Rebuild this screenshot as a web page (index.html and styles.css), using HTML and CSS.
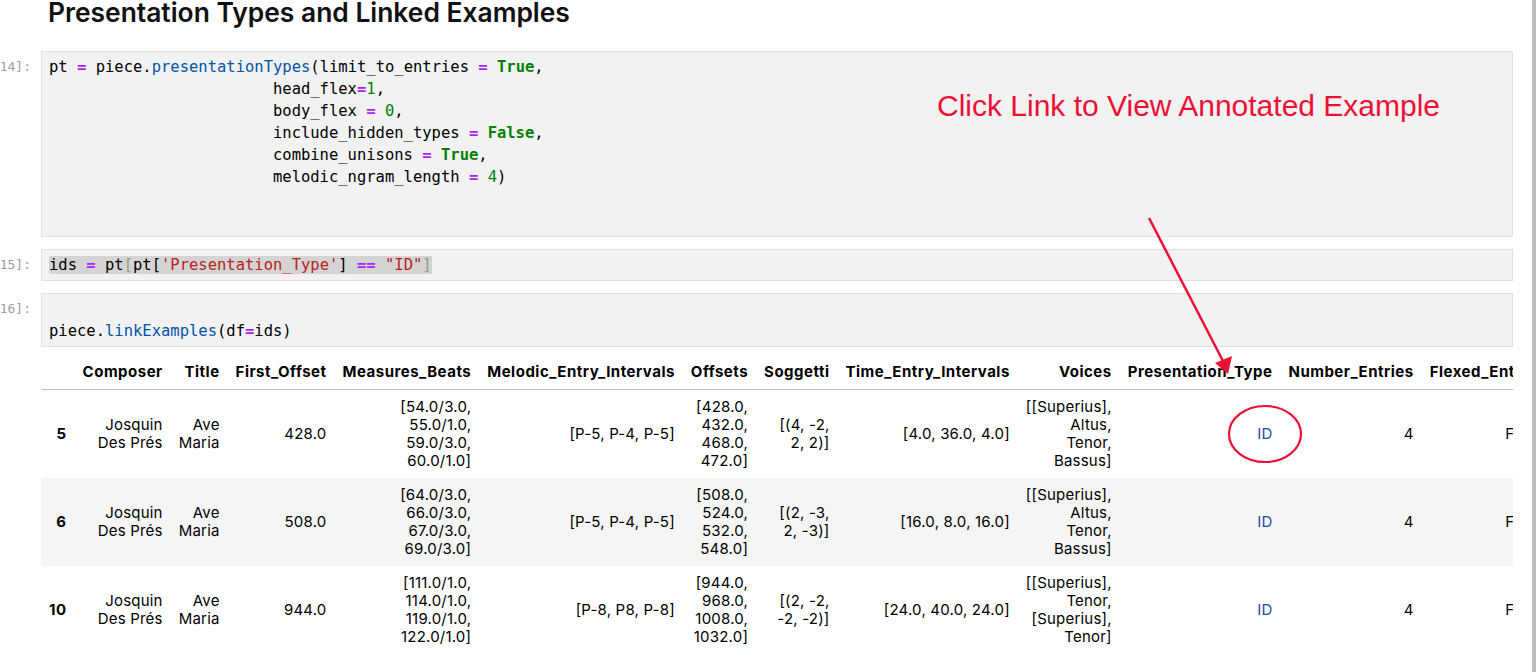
FILE: index.html
```html
<!DOCTYPE html>
<html lang="en">
<head>
<meta charset="utf-8">
<title>Presentation Types and Linked Examples</title>
<link rel="stylesheet" href="styles.css">
</head>
<body>
<div class="page">
  <div class="main">
    <h2 class="title">Presentation Types and Linked Examples</h2>

    <div class="cell">
      <div class="prompt"><span>[14]:</span></div>
      <div class="input">
<pre class="code">pt <span class="op">=</span> piece<span>.</span><span class="prop">presentationTypes</span>(limit_to_entries <span class="op">=</span> <span class="kw">True</span>,
                        head_flex<span class="op">=</span><span class="num">1</span>,
                        body_flex <span class="op">=</span> <span class="num">0</span>,
                        include_hidden_types <span class="op">=</span> <span class="kw">False</span>,
                        combine_unisons <span class="op">=</span> <span class="kw">True</span>,
                        melodic_ngram_length <span class="op">=</span> <span class="num">4</span>)

 </pre>
      </div>
    </div>

    <div class="cell">
      <div class="prompt"><span>[15]:</span></div>
      <div class="input">
<pre class="code"><span class="sel">ids <span class="op">=</span> pt<span class="match">[</span>pt[<span class="str">'Presentation_Type'</span>] <span class="op">==</span> <span class="str">"ID"</span><span class="match">]</span></span></pre>
      </div>
    </div>

    <div class="cell cell-last">
      <div class="prompt"><span>[16]:</span></div>
      <div class="input">
<pre class="code"> 
piece<span>.</span><span class="prop">linkExamples</span>(df<span class="op">=</span>ids)</pre>
      </div>
    </div>

    <div class="table-wrap">
      <table class="df">
        <thead>
          <tr>
            <th></th>
            <th>Composer</th>
            <th>Title</th>
            <th>First_Offset</th>
            <th>Measures_Beats</th>
            <th>Melodic_Entry_Intervals</th>
            <th>Offsets</th>
            <th>Soggetti</th>
            <th>Time_Entry_Intervals</th>
            <th>Voices</th>
            <th>Presentation_Type</th>
            <th>Number_Entries</th>
            <th>Flexed_Entries</th>
          </tr>
        </thead>
        <tbody>
          <tr>
            <th>5</th>
            <td>Josquin<br>Des Prés</td>
            <td>Ave<br>Maria</td>
            <td>428.0</td>
            <td>[54.0/3.0,<br>55.0/1.0,<br>59.0/3.0,<br>60.0/1.0]</td>
            <td>[P-5, P-4, P-5]</td>
            <td>[428.0,<br>432.0,<br>468.0,<br>472.0]</td>
            <td>[(4, -2,<br>2, 2)]</td>
            <td>[4.0, 36.0, 4.0]</td>
            <td>[[Superius],<br>Altus,<br>Tenor,<br>Bassus]</td>
            <td><a class="link" href="#">ID</a></td>
            <td>4</td>
            <td class="flexed">False</td>
          </tr>
          <tr>
            <th>6</th>
            <td>Josquin<br>Des Prés</td>
            <td>Ave<br>Maria</td>
            <td>508.0</td>
            <td>[64.0/3.0,<br>66.0/3.0,<br>67.0/3.0,<br>69.0/3.0]</td>
            <td>[P-5, P-4, P-5]</td>
            <td>[508.0,<br>524.0,<br>532.0,<br>548.0]</td>
            <td>[(2, -3,<br>2, -3)]</td>
            <td>[16.0, 8.0, 16.0]</td>
            <td>[[Superius],<br>Altus,<br>Tenor,<br>Bassus]</td>
            <td><a class="link" href="#">ID</a></td>
            <td>4</td>
            <td class="flexed">False</td>
          </tr>
          <tr>
            <th>10</th>
            <td>Josquin<br>Des Prés</td>
            <td>Ave<br>Maria</td>
            <td>944.0</td>
            <td>[111.0/1.0,<br>114.0/1.0,<br>119.0/1.0,<br>122.0/1.0]</td>
            <td>[P-8, P8, P-8]</td>
            <td>[944.0,<br>968.0,<br>1008.0,<br>1032.0]</td>
            <td>[(2, -2,<br>-2, -2)]</td>
            <td>[24.0, 40.0, 24.0]</td>
            <td>[[Superius],<br>Tenor,<br>[Superius],<br>Tenor]</td>
            <td><a class="link" href="#">ID</a></td>
            <td>4</td>
            <td class="flexed">False</td>
          </tr>
        </tbody>
      </table>
    </div>

    <div class="note">Click Link to View Annotated Example</div>
    <svg class="overlay" width="1536" height="672" viewBox="0 0 1536 672" aria-hidden="true">
      <line x1="1149" y1="218" x2="1223" y2="361" stroke="#ee0f35" stroke-width="2.5"/>
      <polygon points="1228,374 1215,363 1232,356" fill="#ee0f35"/>
      <ellipse cx="1265" cy="434" rx="36" ry="28" fill="none" stroke="#ee0f35" stroke-width="2.2"/>
    </svg>
  </div>
  <div class="scrollbar"></div>
</div>
</body>
</html>
```

FILE: styles.css
```css
html, body {
  margin: 0;
  padding: 0;
  background: #ffffff;
  overflow: hidden;
}

body {
  font-family: Inter, "Noto Sans", sans-serif;
  color: #000;
}

.page {
  display: flex;
  width: 1536px;
  height: 672px;
}

.main {
  position: relative;
  flex: 1;
  padding-right: 19px;
  min-width: 0;
}

.scrollbar {
  width: 4px;
  flex: none;
  background: #bdbdbd;
}

.title {
  margin: 0 0 27px 48px;
  font-family: Inter, "Noto Sans", sans-serif;
  font-weight: 600;
  font-size: 26.4px;
  line-height: 24px;
  color: #111;
}

.cell {
  display: flex;
  margin-bottom: 12px;
}

.cell-last {
  margin-bottom: 8px;
}

.prompt {
  width: 41px;
  flex: none;
  box-sizing: border-box;
  display: flex;
  justify-content: flex-end;
  padding-right: 10px;
  padding-top: 5px;
  font-family: "DejaVu Sans Mono", monospace;
  font-size: 13px;
  line-height: 22px;
  color: #9e9e9e;
  white-space: nowrap;
}

.input {
  flex: 1;
  background: #f2f2f2;
  border: 1px solid #e0e0e0;
  padding: 4px 7px;
  min-width: 0;
}

.code {
  margin: 0;
  font-family: "DejaVu Sans Mono", monospace;
  font-size: 15.5px;
  line-height: 22px;
  color: #000;
}

.op { color: #aa22ff; font-weight: bold; }
.kw { color: #008000; font-weight: bold; }
.num { color: #008000; }
.prop { color: #0055aa; }
.str { color: #ba2121; }
.match { color: #9a9a7a; }
.sel { background: #d4d4d4; }

.table-wrap {
  margin-left: 41px;
  width: 1472px;
  overflow: hidden;
}

.df {
  border-collapse: collapse;
  border-spacing: 0;
  font-family: Inter, "Noto Sans", sans-serif;
  font-size: 15px;
  line-height: 18px;
  letter-spacing: 0.2px;
  white-space: nowrap;
  color: #000;
}

.df th,
.df td {
  padding: 8px;
  text-align: right;
  vertical-align: middle;
}

.df thead th {
  font-weight: 700;
  letter-spacing: 0.5px;
  border-bottom: 1px solid #bdbdbd;
}

.df tbody th {
  font-weight: 700;
  letter-spacing: 0.5px;
}

.df tbody tr:nth-child(even) {
  background: #f5f5f5;
}

.df td.flexed {
  padding-right: 9px;
}

.link {
  color: #1f4ea3;
  text-decoration: none;
}

.note {
  position: absolute;
  left: 937px;
  top: 88px;
  font-family: "Liberation Sans", Arial, sans-serif;
  font-size: 30px;
  line-height: 36px;
  color: #ee0f35;
  white-space: nowrap;
}

.overlay {
  position: absolute;
  left: 0;
  top: 0;
  pointer-events: none;
}
```
